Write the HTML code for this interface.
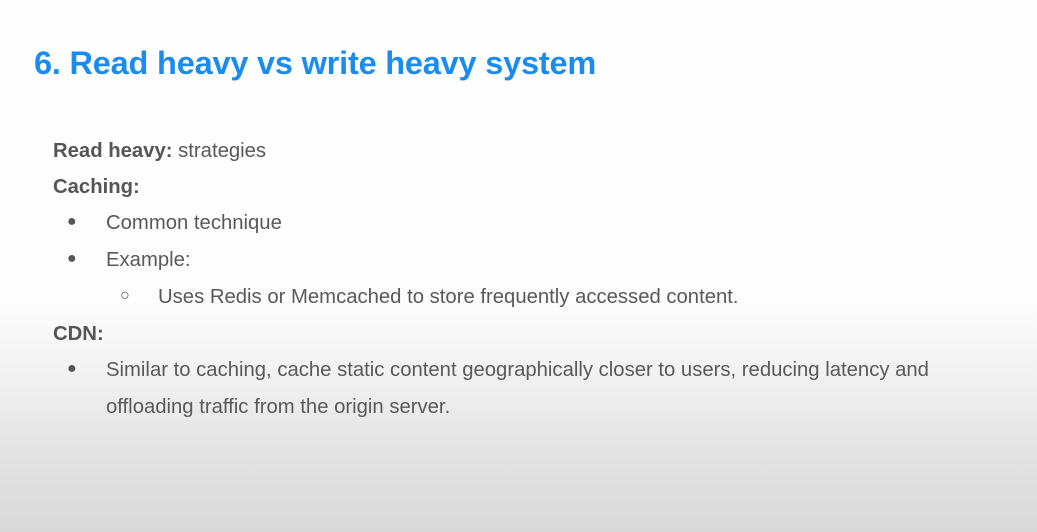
<!DOCTYPE html>
<html><head><style>
html,body{margin:0;padding:0}
body{width:1037px;height:532px;overflow:hidden;position:relative;font-family:"Liberation Sans",sans-serif;
background:linear-gradient(to bottom,#fefefe 0px,#fdfdfd 300px,#f2f2f2 370px,#e4e4e4 450px,#d9d9d9 532px);}
.t{position:absolute;left:34px;top:45px;font-size:32.5px;font-weight:bold;color:#1a8cf0;white-space:nowrap;letter-spacing:-0.2px}
.l{position:absolute;font-size:20.3px;color:#595959;white-space:nowrap;line-height:22px}
b{color:#555;font-weight:bold}
.b{position:absolute;font-size:16px;color:#555}
</style></head><body>
<div class="t">6. Read heavy vs write heavy system</div>
<div class="l" style="left:53px;top:140px"><b>Read heavy:</b> strategies</div>
<div class="l" style="left:53px;top:176px"><b>Caching:</b></div>
<div class="b" style="left:67px;top:213px">●</div>
<div class="l" style="left:106px;top:212px">Common technique</div>
<div class="b" style="left:67px;top:250px">●</div>
<div class="l" style="left:106px;top:249px">Example:</div>
<div class="b" style="left:120px;top:287px">○</div>
<div class="l" style="left:158px;top:286px">Uses Redis or Memcached to store frequently accessed content.</div>
<div class="l" style="left:53px;top:323px"><b>CDN:</b></div>
<div class="b" style="left:67px;top:360px">●</div>
<div class="l" style="left:106px;top:359px">Similar to caching, cache static content geographically closer to users, reducing latency and</div>
<div class="l" style="left:106px;top:396px">offloading traffic from the origin server.</div>
</body></html>
